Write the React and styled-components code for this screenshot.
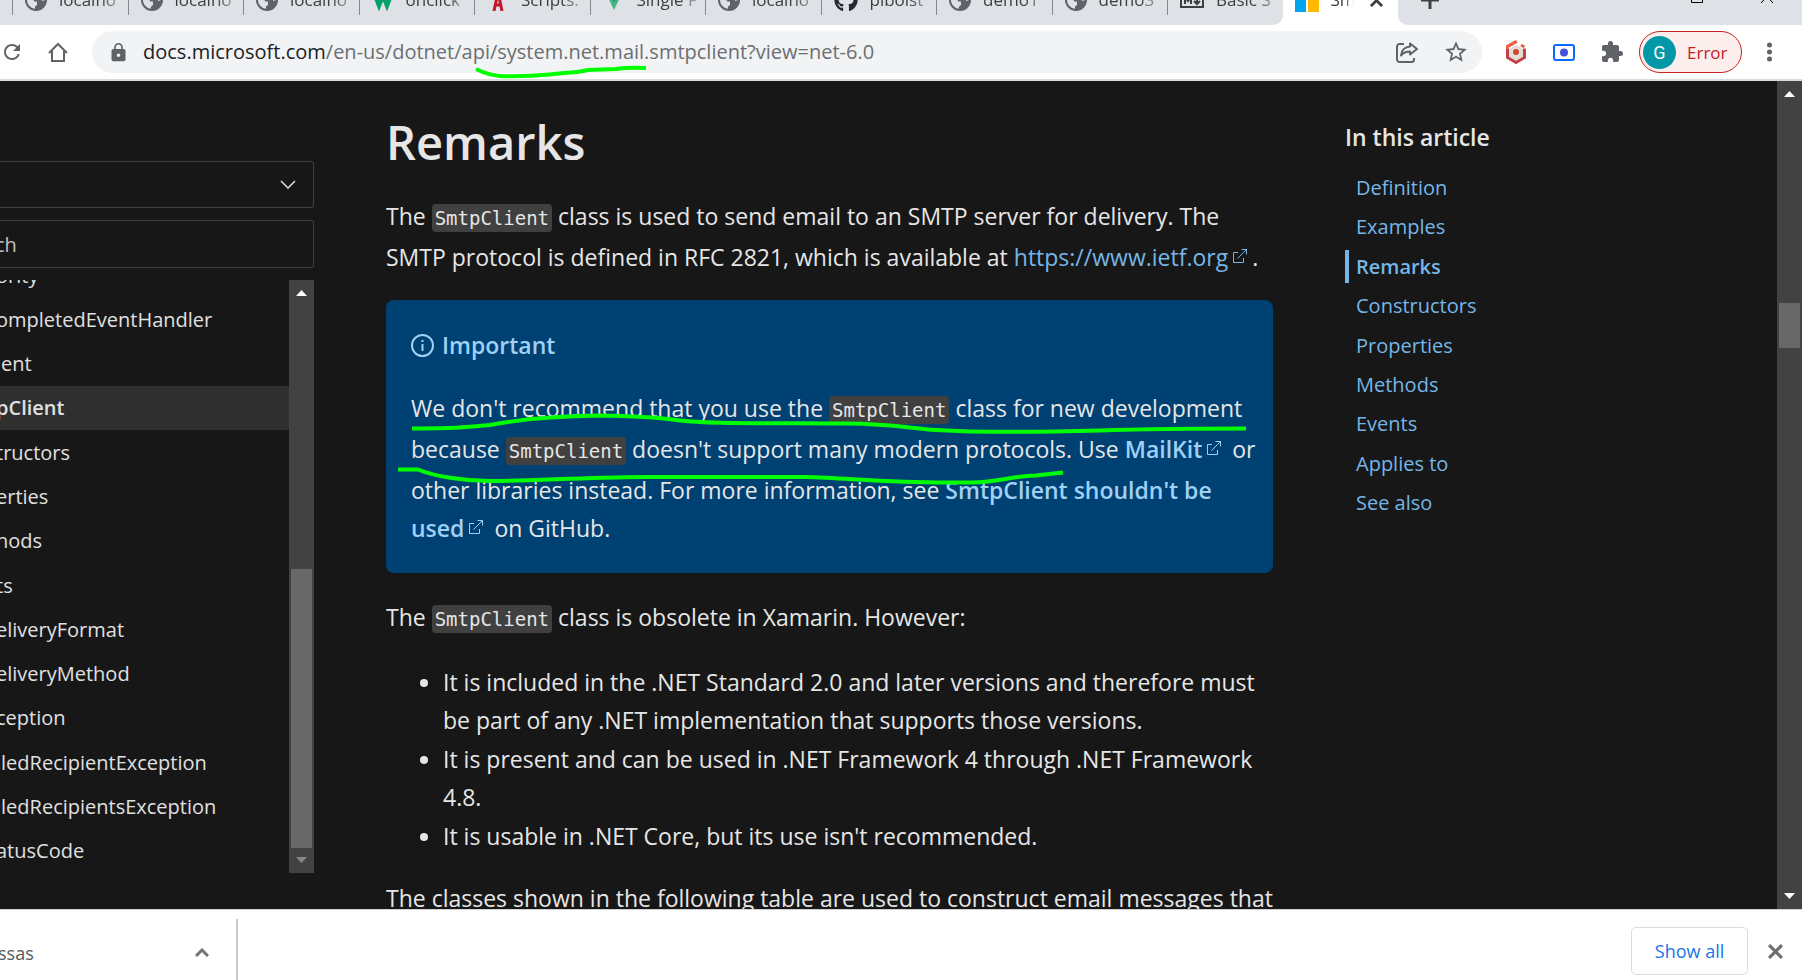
import React from "react";
import styled, { createGlobalStyle, css } from "styled-components";
import { FaGithub } from "react-icons/fa";
import { MdLock, MdExtension, MdStarBorder, MdRefresh } from "react-icons/md";

const GlobalStyle = createGlobalStyle`
  *, *::before, *::after { box-sizing: border-box; }
  body {
    margin: 0;
    background: #171717;
    font-family: "Open Sans", "Noto Sans", sans-serif;
  }
  button, input, select { font: inherit; }
`;

const Window = styled.div`
  display: flex;
  flex-direction: column;
  height: 100vh;
  overflow: hidden;
`;

/* ---------- tab strip ---------- */

const TabStrip = styled.div`
  display: flex;
  flex: none;
  height: 25px;
  overflow: hidden;
  background: #ffffff;
`;

const TabGroup = styled.div`
  display: flex;
  flex: 11 1 0;
  min-width: 0;
  align-items: flex-end;
  background: #dee1e6;
  border-bottom-right-radius: 10px;
`;

const StripLead = styled.div`
  flex: none;
  width: 12px;
  height: 25px;
  background: #dee1e6;
`;

const Tab = styled.div`
  display: flex;
  flex: 1 1 0;
  min-width: 0;
  height: 50px;
  align-items: center;
  gap: 12px;
  padding-left: ${(p) => (p.$active ? "12px" : "0")};

  ${(p) =>
    !p.$active &&
    css`
      &::before {
        content: "";
        flex: none;
        width: 1px;
        height: 30px;
        background: #84878b;
      }
    `}

  svg {
    flex: none;
  }
`;

const TabTitle = styled.span`
  flex: 1;
  min-width: 0;
  overflow: hidden;
  white-space: nowrap;
  font-size: 17px;
  line-height: 24px;
  color: #3c4043;
  mask-image: linear-gradient(to right, #000 60%, transparent 100%);
`;

const ActiveSlot = styled.div`
  display: flex;
  flex: 1 1 0;
  min-width: 0;
  align-items: flex-end;
`;

const StripButton = styled.button`
  display: flex;
  align-items: center;
  justify-content: center;
  width: ${(p) => p.$w || 24}px;
  height: 50px;
  padding: 0;
  border: 0;
  background: none;
`;

const CloseTabButton = styled(StripButton)`
  margin-left: -12px;
`;

const StripEnd = styled.div`
  display: flex;
  flex: none;
  width: 404px;
  align-items: flex-end;
  padding-left: 20px;
  background: #dee1e6;
  border-bottom-left-radius: 10px;
`;

const WindowControls = styled.div`
  display: flex;
  margin-left: auto;
`;

/* ---------- toolbar ---------- */

const Toolbar = styled.div`
  display: flex;
  flex: none;
  height: 56px;
  align-items: center;
  padding-right: 21px;
  background: #ffffff;
  border-bottom: 2px solid #d7dbdc;
`;

const IconButton = styled.button`
  display: flex;
  flex: none;
  width: ${(p) => p.$w || 48}px;
  height: 42px;
  align-items: center;
  justify-content: center;
  padding: 0;
  border: 0;
  background: none;
  color: #5f6368;
`;

const Omnibox = styled.div`
  position: relative;
  display: flex;
  flex: 1;
  min-width: 0;
  height: 42px;
  align-items: center;
  margin-right: 10px;
  padding: 0 5px 0 16px;
  border-radius: 21px;
  background: #f1f3f4;
  color: #5f6368;
`;

const Address = styled.div`
  flex: 1;
  min-width: 0;
  margin-left: 14px;
  overflow: hidden;
  white-space: nowrap;
  font-size: 20px;
  line-height: 30px;
  color: #6b6f73;

  b {
    font-weight: 400;
    color: #202124;
  }
`;

const ProfileButton = styled.button`
  display: flex;
  flex: none;
  width: 103px;
  height: 42px;
  align-items: center;
  gap: 11px;
  margin: 0 15px 0 3px;
  padding: 0 0 0 3px;
  border: 1px solid #c5221f;
  border-radius: 21px;
  background: #fceeed;
  color: #c5221f;
  font-size: 17px;
`;

const Avatar = styled.span`
  display: flex;
  width: 33px;
  height: 33px;
  align-items: center;
  justify-content: center;
  border-radius: 50%;
  background: #0097a7;
  color: #ffffff;
  font-family: Roboto, sans-serif;
  font-size: 18px;
`;

/* ---------- page ---------- */

const Page = styled.div`
  display: flex;
  flex: 1;
  min-height: 0;
  background: #171717;
  color: #e6e6e6;
`;

const Sidebar = styled.aside`
  display: flex;
  flex: none;
  flex-direction: column;
  gap: 12px;
  width: 320px;
  margin-left: -6px;
  padding: 80px 0 36px;
`;

const VersionField = styled.label`
  position: relative;
  display: block;

  select {
    display: block;
    width: 100%;
    height: 47px;
    appearance: none;
    border: 1px solid #404040;
    border-radius: 2px;
    background: transparent;
    color: #e6e6e6;
    font-size: 20px;
  }

  svg {
    position: absolute;
    top: 19px;
    right: 18px;
  }
`;

const FilterInput = styled.input`
  display: block;
  width: 100%;
  height: 48px;
  padding: 0;
  border: 1px solid #404040;
  border-radius: 2px;
  background: transparent;
  color: #e6e6e6;
  font-size: 20px;

  &::placeholder {
    color: #c0c0c0;
    opacity: 1;
  }
`;

const Tree = styled.nav`
  display: flex;
  flex: 1;
  min-height: 0;
`;

const TreeViewport = styled.div`
  display: flex;
  flex: 1;
  min-width: 0;
  flex-direction: column;
  justify-content: flex-end;
  overflow: hidden;
`;

const TreeList = styled.ul`
  display: flex;
  flex: none;
  flex-direction: column;
  height: 620px;
  margin: 0;
  padding: 0;
  list-style: none;
`;

const TreeItem = styled.li`
  display: flex;
  flex: 1;
  align-items: center;
  padding-left: 2px;
  background: ${(p) => (p.$current ? "#2f2f2f" : "transparent")};

  a {
    color: #e0e0e0;
    font-size: 20px;
    font-weight: ${(p) => (p.$current ? 600 : 400)};
    text-decoration: none;
    white-space: nowrap;
  }
`;

const ScrollTrack = styled.div`
  display: flex;
  flex: none;
  flex-direction: column;
  width: 25px;
  align-items: center;
  justify-content: space-between;
  padding: 10px 0;
  background: #424242;
`;

const ScrollRail = styled.div`
  display: flex;
  flex: 1;
  flex-direction: column;
  width: 21px;
  padding: 9px 0;
`;

const ScrollThumb = styled.div`
  height: ${(p) => p.$size}px;
  margin-top: ${(p) => (p.$end ? "auto" : p.$offset + "px")};
  background: #686868;
`;

const Article = styled.main`
  flex: 0 1 887px;
  min-width: 0;
  margin: 0 72px;
  padding-top: 31px;
  font-size: 23px;
  line-height: 38px;
  overflow: hidden;
`;

const Title = styled.h2`
  margin: 0 0 25px;
  font-size: 47px;
  font-weight: 600;
  line-height: 60px;
`;

const Paragraph = styled.p`
  margin: 0 0 24px;
`;

const Code = styled.code`
  display: inline-block;
  height: 28px;
  margin-bottom: 6px;
  padding: 0 3px;
  border-radius: 4px;
  background: #404040;
  font-family: "DejaVu Sans Mono", monospace;
  font-size: 19px;
  line-height: 28px;
`;

const Link = styled.a`
  color: ${(p) => (p.$strong ? "#9fd0f5" : "#75b6e7")};
  font-weight: ${(p) => (p.$strong ? 600 : 400)};
  text-decoration: none;

  svg {
    margin: 0 5px;
    vertical-align: 3px;
  }
`;

const Alert = styled.section`
  position: relative;
  margin-bottom: 25px;
  padding: 26px 14px 26px 25px;
  border-radius: 8px;
  background: #004173;
`;

const AlertTitle = styled.p`
  display: flex;
  align-items: center;
  gap: 8px;
  margin: 0 0 25px;
  color: #9fd0f5;
  font-weight: 600;
`;

const AlertText = styled.p`
  margin: 0;
`;

const Bullets = styled.ul`
  display: flex;
  flex-direction: column;
  gap: 1px;
  margin: 0 0 24px;
  padding-left: 57px;
`;

const Marker = styled.svg`
  position: absolute;
  left: ${(p) => p.$x}px;
  top: ${(p) => p.$y}px;
  overflow: visible;
  pointer-events: none;
  fill: none;
  stroke: #00ff00;
  stroke-width: 4;
`;

const Toc = styled.nav`
  flex: 1;
  min-width: 0;
  padding-top: 37px;
`;

const TocTitle = styled.h3`
  margin: 0 0 15px;
  font-size: 23px;
  font-weight: 600;
  line-height: 38px;
`;

const TocList = styled.ul`
  display: flex;
  flex-direction: column;
  justify-content: space-between;
  height: 348px;
  margin: 0;
  padding: 0;
  list-style: none;
`;

const TocItem = styled.li`
  height: 33px;
  padding-left: 7px;
  border-left: 4px solid ${(p) => (p.$current ? "#75b6e7" : "transparent")};

  a {
    color: #75b6e7;
    font-size: 20px;
    font-weight: ${(p) => (p.$current ? 600 : 400)};
    line-height: 33px;
    text-decoration: none;
  }
`;

/* ---------- downloads ---------- */

const DownloadBar = styled.footer`
  display: flex;
  flex: none;
  height: 71px;
  align-items: center;
  padding: 12px 0 0;
  border-top: 1px solid #cfd0d2;
  background: #ffffff;
`;

const DownloadItem = styled.div`
  display: flex;
  width: 240px;
  height: 61px;
  align-items: center;
  align-self: flex-end;
  justify-content: space-between;
  margin-left: -2px;
  padding: 6px 12px 0 0;
  border-right: 2px solid #cbcbcb;
  color: #55585c;
  font-size: 18px;
`;

const ShowAll = styled.button`
  width: 117px;
  height: 48px;
  margin-left: auto;
  padding: 0;
  border: 1px solid #dadce0;
  border-radius: 5px;
  background: #ffffff;
  color: #1a73e8;
  font-size: 18px;
`;

/* ---------- icons ---------- */

const Globe = () => (
  <svg width="22" height="22" viewBox="0 0 22 22">
    <circle cx="11" cy="11" r="11" fill="#5f6368" />
    <path
      d="M2 10h5.500l2 2.500h2.500v3.500l-2 1.500v2.300A9 9 0 0 1 2 10zM11 2l-1 3 2.500 1-1 3 3 1.500h2l1 1.500 2.500-1A9 9 0 0 0 14 2.500z"
      fill="#dee1e6"
    />
  </svg>
);

const WIcon = () => (
  <svg width="22" height="22" viewBox="0 0 22 22" fill="none" stroke="#04a06a" strokeWidth="4">
    <path d="M2 4l5 13 4-10 4 10 5-13" />
  </svg>
);

const AIcon = () => (
  <svg width="22" height="22" viewBox="0 0 22 22" fill="none" stroke="#c4162a" strokeWidth="3">
    <path d="M7 22l4-19 4 19M8 16h7" />
  </svg>
);

const VIcon = () => (
  <svg width="22" height="22" viewBox="0 0 22 22">
    <path d="M2 2h18l-9 19z" fill="#41b883" />
    <path d="M8 3h6l-3 10z" fill="#35495e" />
  </svg>
);

const MdIcon = () => (
  <svg width="24" height="16" viewBox="0 0 24 16" fill="none" stroke="#3c4043" strokeWidth="2">
    <path d="M1 1h22v14H1zM5 12V5l3 4 3-4v7M17 4v7M14 9l3 3 3-3" />
  </svg>
);

const WindowsIcon = () => (
  <svg width="24" height="24" viewBox="0 0 24 24">
    <path d="M0 0h11v11H0z" fill="#f25022" />
    <path d="M13 0h11v11H13z" fill="#7fba00" />
    <path d="M0 12h11v12H0z" fill="#00a4ef" />
    <path d="M13 12h11v12H13z" fill="#ffb900" />
  </svg>
);

const Cross = ({ size = 14, color = "#5f6368", width = 3 }) => (
  <svg width={size} height={size} viewBox="0 0 14 14" stroke={color} strokeWidth={width}>
    <path d="M1 1l12 12M13 1L1 13" />
  </svg>
);

const HomeIcon = () => (
  <svg width="20" height="20" viewBox="0 0 20 20" fill="none" stroke="#5f6368" strokeWidth="2">
    <path d="M1 11L10 2l9 9M4 9v10h12V9" />
  </svg>
);

const ShareIcon = () => (
  <svg width="22" height="21" viewBox="0 0 22 21" fill="none" stroke="#5f6368" strokeWidth="2" strokeLinejoin="round">
    <path d="M8 2H3.500A2.500 2.500 0 0 0 1 4.500v13A2.500 2.500 0 0 0 3.500 20h12a2.500 2.500 0 0 0 2.500-2.500V16" />
    <path d="M14 1.500l7 5.500-7 5.500v-3c-4 0-6.500 1-9 4 .5-5 3.500-8.500 9-9z" />
  </svg>
);

const HexIcon = () => (
  <svg width="22" height="24" viewBox="0 0 22 24">
    <path d="M11 5l7 4v7l-7 5-7-5V9z" fill="#e3ddd6" />
    <path d="M11 1.500L2.500 6.500v11l8.500 5 8.500-5v-9" fill="none" stroke="#c2424a" strokeWidth="3" />
    <path d="M2.500 9V6.500L12 1.500M16 5l3.500 2" fill="none" stroke="#ec6547" strokeWidth="3" />
    <circle cx="11" cy="12" r="3" fill="#d24430" />
  </svg>
);

const CameraIcon = () => (
  <svg width="22" height="17" viewBox="0 0 22 17">
    <rect x="1" y="1" width="20" height="15" rx="2" fill="#fff" stroke="#0a6cff" strokeWidth="2" />
    <circle cx="11" cy="8.500" r="4" fill="#4450d8" />
  </svg>
);

const ExternalIcon = () => (
  <svg width="14" height="14" viewBox="0 0 14 14" fill="none" stroke="currentColor" strokeWidth="1">
    <path d="M5 3.500H.5v10h10V9M4.500 9.500l9-9M8.500.5h5v5" />
  </svg>
);

const InfoIcon = () => (
  <svg width="23" height="23" viewBox="0 0 23 23" fill="none" stroke="#9fd0f5" strokeWidth="2">
    <circle cx="11.500" cy="11.500" r="10.500" />
    <path d="M11.500 10v7M11.500 6v2" />
  </svg>
);

const Arrow = ({ down, color = "#ffffff" }) => (
  <svg width="11" height="6" viewBox="0 0 11 6" fill={color}>
    <path d={down ? "M0 0h11L5.500 6z" : "M0 6h11L5.500 0z"} />
  </svg>
);

/* ---------- data ---------- */

const tabs = [
  [Globe, "localho"],
  [Globe, "localho"],
  [Globe, "localho"],
  [WIcon, "onclick"],
  [AIcon, "Scripts."],
  [VIcon, "Single F"],
  [Globe, "localho"],
  [() => <FaGithub size={24} color="#24292f" />, "pibolst"],
  [Globe, "demo1"],
  [Globe, "demo3"],
  [MdIcon, "Basic S"],
];

const treeItems = [
  "ority",
  "ompletedEventHandler",
  "ient",
  "pClient",
  "tructors",
  "erties",
  "hods",
  "ts",
  "eliveryFormat",
  "eliveryMethod",
  "ception",
  "iledRecipientException",
  "iledRecipientsException",
  "atusCode",
];

const tocItems = [
  "Definition",
  "Examples",
  "Remarks",
  "Constructors",
  "Properties",
  "Methods",
  "Events",
  "Applies to",
  "See also",
];

export default function App() {
  return (
    <Window>
      <GlobalStyle />

      <TabStrip>
        <StripLead />
        <TabGroup>
          {tabs.map(([Icon, title], i) => (
            <Tab key={i}>
              <Icon />
              <TabTitle>{title}</TabTitle>
            </Tab>
          ))}
        </TabGroup>
        <ActiveSlot>
          <Tab $active>
            <WindowsIcon />
            <TabTitle>Sm</TabTitle>
            <CloseTabButton $w={44} aria-label="Close tab">
              <Cross size={13} color="#3c4043" />
            </CloseTabButton>
          </Tab>
        </ActiveSlot>
        <StripEnd>
          <StripButton aria-label="New tab">
            <svg width="18" height="18" viewBox="0 0 18 18" stroke="#3c4043" strokeWidth="3">
              <path d="M9 0v18M0 9h18" />
            </svg>
          </StripButton>
          <WindowControls>
            <StripButton $w={70} aria-label="Maximize">
              <svg width="12" height="12" viewBox="0 0 12 12" fill="none" stroke="#000">
                <path d="M.5-2.500h11v11H.5z" />
              </svg>
            </StripButton>
            <StripButton $w={70} aria-label="Close window">
              <svg width="14" height="14" viewBox="0 3 14 14" stroke="#000">
                <path d="M1 0l12 13M13 0L1 13" />
              </svg>
            </StripButton>
          </WindowControls>
        </StripEnd>
      </TabStrip>

      <Toolbar>
        <IconButton $w={24} aria-label="Reload">
          <MdRefresh size={32} />
        </IconButton>
        <IconButton $w={68} aria-label="Home">
          <HomeIcon />
        </IconButton>
        <Omnibox>
          <MdLock size={21} />
          <Address>
            <b>docs.microsoft.com</b>/en-us/dotnet/api/system.net.mail.smtpclient?view=net-6.0
          </Address>
          <IconButton $w={56} aria-label="Share">
            <ShareIcon />
          </IconButton>
          <IconButton $w={42} aria-label="Bookmark">
            <MdStarBorder size={26} />
          </IconButton>
          <Marker $x={384} $y={37} width="170" height="10" viewBox="0 0 170 10">
            <path d="M0 1Q12 7 24 8Q50 9 88 5Q100 5 112 2L140 1Q152-1 170 0" />
          </Marker>
        </Omnibox>
        <IconButton aria-label="Security extension">
          <HexIcon />
        </IconButton>
        <IconButton aria-label="Capture extension">
          <CameraIcon />
        </IconButton>
        <IconButton aria-label="Extensions">
          <MdExtension size={24} />
        </IconButton>
        <ProfileButton>
          <Avatar>G</Avatar>
          Error
        </ProfileButton>
        <IconButton $w={24} aria-label="Menu">
          <svg width="5" height="20" viewBox="0 0 5 20" fill="#5f6368">
            <circle cx="2.500" cy="3" r="2.500" />
            <circle cx="2.500" cy="10" r="2.500" />
            <circle cx="2.500" cy="17" r="2.500" />
          </svg>
        </IconButton>
      </Toolbar>

      <Page>
        <Sidebar>
          <VersionField>
            <select aria-label="Version">
              <option> </option>
            </select>
            <svg width="16" height="9" viewBox="0 0 16 9" fill="none" stroke="#e0e0e0" strokeWidth="1.500">
              <path d="M1 1l7 7 7-7" />
            </svg>
          </VersionField>
          <FilterInput aria-label="Search" placeholder="ch" />
          <Tree aria-label="Contents">
            <TreeViewport>
              <TreeList>
                {treeItems.map((name) => (
                  <TreeItem key={name} $current={name === "pClient"}>
                    <a href="#tree">{name}</a>
                  </TreeItem>
                ))}
              </TreeList>
            </TreeViewport>
            <ScrollTrack>
              <Arrow />
              <ScrollRail>
                <ScrollThumb $size={279} $end />
              </ScrollRail>
              <Arrow down color="#868686" />
            </ScrollTrack>
          </Tree>
        </Sidebar>

        <Article>
          <Title>Remarks</Title>
          <Paragraph>
            The <Code>SmtpClient</Code> class is used to send email to an SMTP server for delivery. The SMTP
            protocol is defined in RFC 2821, which is available at{" "}
            <Link href="#ietf">
              https://www.ietf.org
              <ExternalIcon />
            </Link>
            .
          </Paragraph>
          <Alert>
            <AlertTitle>
              <InfoIcon />
              Important
            </AlertTitle>
            <AlertText>
              We don't recommend that you use the <Code>SmtpClient</Code> class for new development because{" "}
              <Code>SmtpClient</Code> doesn't support many modern protocols. Use{" "}
              <Link $strong href="#mailkit">
                MailKit
                <ExternalIcon />
              </Link>{" "}
              or other libraries instead. For more information, see{" "}
              <Link $strong href="#github">
                SmtpClient shouldn't be used
                <ExternalIcon />
              </Link>{" "}
              on GitHub.
            </AlertText>
            <Marker $x={0} $y={0} width="887" height="273" viewBox="0 0 887 273">
              <path d="M26 128.500C60 129 85 127 104 125C130 120 170 116 214 115.500C250 116 275 118 290 120C320 124 370 123 460 123.500C510 124 520 128 550 130C600 133 660 132 714 130.500C760 129 800 128.500 860 128.500" />
              <path d="M12 169.500H32C50 177 80 181 104 181C150 181 190 177.500 260 177H420C460 178 500 182.500 560 182.500H585C615 182 625 176 650 175.500L677 172.500" />
            </Marker>
          </Alert>
          <Paragraph>
            The <Code>SmtpClient</Code> class is obsolete in Xamarin. However:
          </Paragraph>
          <Bullets>
            <li>
              It is included in the .NET Standard 2.0 and later versions and therefore must be part of any .NET
              implementation that supports those versions.
            </li>
            <li>It is present and can be used in .NET Framework 4 through .NET Framework 4.8.</li>
            <li>It is usable in .NET Core, but its use isn't recommended.</li>
          </Bullets>
          <Paragraph>
            The classes shown in the following table are used to construct email messages that
          </Paragraph>
        </Article>

        <Toc aria-label="In this article">
          <TocTitle>In this article</TocTitle>
          <TocList>
            {tocItems.map((name) => (
              <TocItem key={name} $current={name === "Remarks"}>
                <a href="#toc">{name}</a>
              </TocItem>
            ))}
          </TocList>
        </Toc>

        <ScrollTrack>
          <Arrow />
          <ScrollRail>
            <ScrollThumb $size={45} $offset={197} />
          </ScrollRail>
          <Arrow down />
        </ScrollTrack>
      </Page>

      <DownloadBar>
        <DownloadItem>
          <span>ssas</span>
          <IconButton $w={44} aria-label="Download options">
            <svg width="14" height="9" viewBox="0 0 14 9" fill="none" stroke="#757575" strokeWidth="3">
              <path d="M1 8l6-6 6 6" />
            </svg>
          </IconButton>
        </DownloadItem>
        <ShowAll>Show all</ShowAll>
        <IconButton $w={54} aria-label="Close downloads">
          <Cross size={15} color="#6c6f73" width={3} />
        </IconButton>
      </DownloadBar>
    </Window>
  );
}
